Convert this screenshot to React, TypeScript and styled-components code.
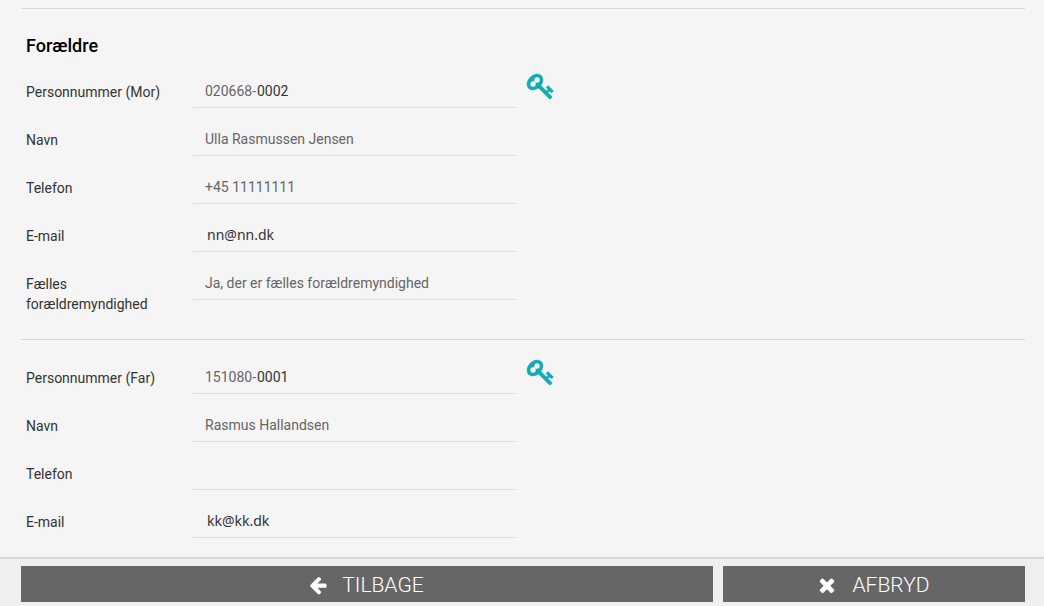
import React, { useId } from "react";
import styled, { createGlobalStyle } from "styled-components";

const GlobalStyle = createGlobalStyle`
  *, *::before, *::after { box-sizing: border-box; }
  body {
    margin: 0;
    background: #f5f5f5;
    color: #333;
    font: 14px/20px Roboto, "Liberation Sans", sans-serif;
  }
`;

const Page = styled.div`
  display: flex;
  flex-direction: column;
  min-height: 100vh;
`;

const Form = styled.form`
  flex: 1;
  padding: 8px 19px 0 21px;
`;

const Section = styled.section`
  border-top: 1px solid #d8d8d8;
  padding: 22px 0 23px 5px;

  &:last-child {
    padding-bottom: 0;
  }
`;

const Heading = styled.h2`
  margin: 3px 0 18px;
  color: #000;
  font-size: 18px;
  line-height: 24px;
  font-weight: 500;
`;

const Row = styled.div`
  display: grid;
  grid-template-columns: 157px minmax(0, 324px) auto;
  column-gap: 10px;
  align-items: start;
  justify-content: start;
  min-height: 48px;
`;

const Label = styled.label`
  padding-top: 6px;
`;

const Field = styled.div`
  display: flex;
  height: 32px;
  padding-left: 12px;
  border-bottom: 1px solid #dedede;
`;

type Tone = "muted" | "dark" | "mail";

const Input = styled.input<{ $tone: Tone; $fixed?: boolean }>`
  flex: ${(p) => (p.$fixed ? "0 0 52px" : "1")};
  min-width: 0;
  height: 30px;
  padding: ${(p) => (p.$tone === "mail" ? "0 0 2px 2px" : "0")};
  border: 0;
  outline: 0;
  background: transparent;
  color: ${(p) => (p.$tone === "muted" ? "#666" : "#333")};
  font-family: ${(p) => (p.$tone === "mail" ? '"Noto Sans", sans-serif' : "inherit")};
  font-size: 14px;
`;

const KeyButton = styled.button`
  display: flex;
  margin-top: -4px;
  padding: 0;
  border: 0;
  background: none;
  color: #0eacb5;
  cursor: pointer;
`;

const Footer = styled.footer`
  display: grid;
  grid-template-columns: 692fr 302fr;
  gap: 10px;
  padding: 7px 19px 4px 21px;
  border-top: 2px solid #d8d8d8;
  background: #efefef;
`;

const ActionButton = styled.button`
  display: flex;
  align-items: center;
  justify-content: center;
  gap: 14px;
  height: 36px;
  padding: 1px 2px 0 0;
  border: 0;
  background: #666;
  color: #fff;
  font: 300 21px/36px Roboto, "Liberation Sans", sans-serif;
  text-transform: uppercase;
  cursor: pointer;
`;

const Glyph = styled.svg<{ $bold?: boolean }>`
  fill: currentColor;
  stroke: currentColor;
  stroke-width: ${(p) => (p.$bold ? 30 : 0)};
  overflow: visible;
`;

const Icon = ({ d, size, bold }: { d: string; size: number; bold?: boolean }) => (
  <Glyph $bold={bold} width={size} height={size} viewBox="0 0 1792 1792" aria-hidden="true">
    <path d={d} />
  </Glyph>
);

const keyPath =
  "M832 512q0-80-56-136t-136-56-136 56-56 136q0 42 19 83-41-19-83-19-80 0-136 56t-56 136 56 136 136 56 136-56 56-136q0-42-19-83 41 19 83 19 80 0 136-56t56-136zm851 704q0 17-49 66t-66 49q-9 0-28.5-16t-36.5-33-38.5-40-24.5-26l-96 96 220 220q28 28 28 68 0 42-39 81t-81 39q-40 0-68-28l-671-671q-176 131-365 131-163 0-265.5-102.5t-102.5-265.5q0-160 95-313t248-248 313-95q163 0 265.5 102.5t102.5 265.5q0 189-131 365l355 355 96-96q-3-3-26-24.5t-40-38.5-33-36.5-16-28.5q0-17 49-66t66-49q13 0 23 10 6 6 46 44.5t82 79.5 86.5 86 73 78 28.5 41z";
const arrowPath =
  "M1664 896v128q0 53-32.5 90.5t-84.5 37.5h-704l293 294q38 36 38 90t-38 90l-75 76q-37 37-90 37-52 0-91-37l-651-652q-37-37-37-90 0-52 37-91l651-650q38-38 91-38 52 0 90 38l75 74q38 38 38 91t-38 91l-293 293h704q52 0 84.5 37.5t32.5 90.5z";
const crossPath =
  "M1490 1322q0 40-28 68l-136 136q-28 28-68 28t-68-28l-294-294-294 294q-28 28-68 28t-68-28l-136-136q-28-28-28-68t28-68l294-294-294-294q-28-28-28-68t28-68l136-136q28-28 68-28t68 28l294 294 294-294q28-28 68-28t68 28l136 136q28 28 28 68t-28 68l-294 294 294 294q28 28 28 68z";

function TextRow({ label, value, tone = "muted" }: { label: string; value: string; tone?: Tone }) {
  const id = useId();
  return (
    <Row>
      <Label htmlFor={id}>{label}</Label>
      <Field>
        <Input id={id} $tone={tone} defaultValue={value} />
      </Field>
    </Row>
  );
}

function CprRow({ label, date, serial }: { label: string; date: string; serial: string }) {
  const id = useId();
  return (
    <Row>
      <Label id={`${id}-label`} htmlFor={id}>{label}</Label>
      <Field>
        <Input id={id} $tone="muted" $fixed defaultValue={`${date}-`} />
        <Input aria-labelledby={`${id}-label`} $tone="dark" defaultValue={serial} />
      </Field>
      <KeyButton type="button" aria-label={label}>
        <Icon d={keyPath} size={28} bold />
      </KeyButton>
    </Row>
  );
}

export default function App() {
  return (
    <Page>
      <GlobalStyle />
      <Form>
        <Section>
          <Heading>Forældre</Heading>
          <CprRow label="Personnummer (Mor)" date="020668" serial="0002" />
          <TextRow label="Navn" value="Ulla Rasmussen Jensen" />
          <TextRow label="Telefon" value="+45 11111111" />
          <TextRow label="E-mail" value="nn@nn.dk" tone="mail" />
          <TextRow label="Fælles forældremyndighed" value="Ja, der er fælles forældremyndighed" />
        </Section>
        <Section>
          <CprRow label="Personnummer (Far)" date="151080" serial="0001" />
          <TextRow label="Navn" value="Rasmus Hallandsen" />
          <TextRow label="Telefon" value="" />
          <TextRow label="E-mail" value="kk@kk.dk" tone="mail" />
        </Section>
      </Form>
      <Footer>
        <ActionButton type="button">
          <Icon d={arrowPath} size={20} />
          Tilbage
        </ActionButton>
        <ActionButton type="button">
          <Icon d={crossPath} size={22} />
          Afbryd
        </ActionButton>
      </Footer>
    </Page>
  );
}
